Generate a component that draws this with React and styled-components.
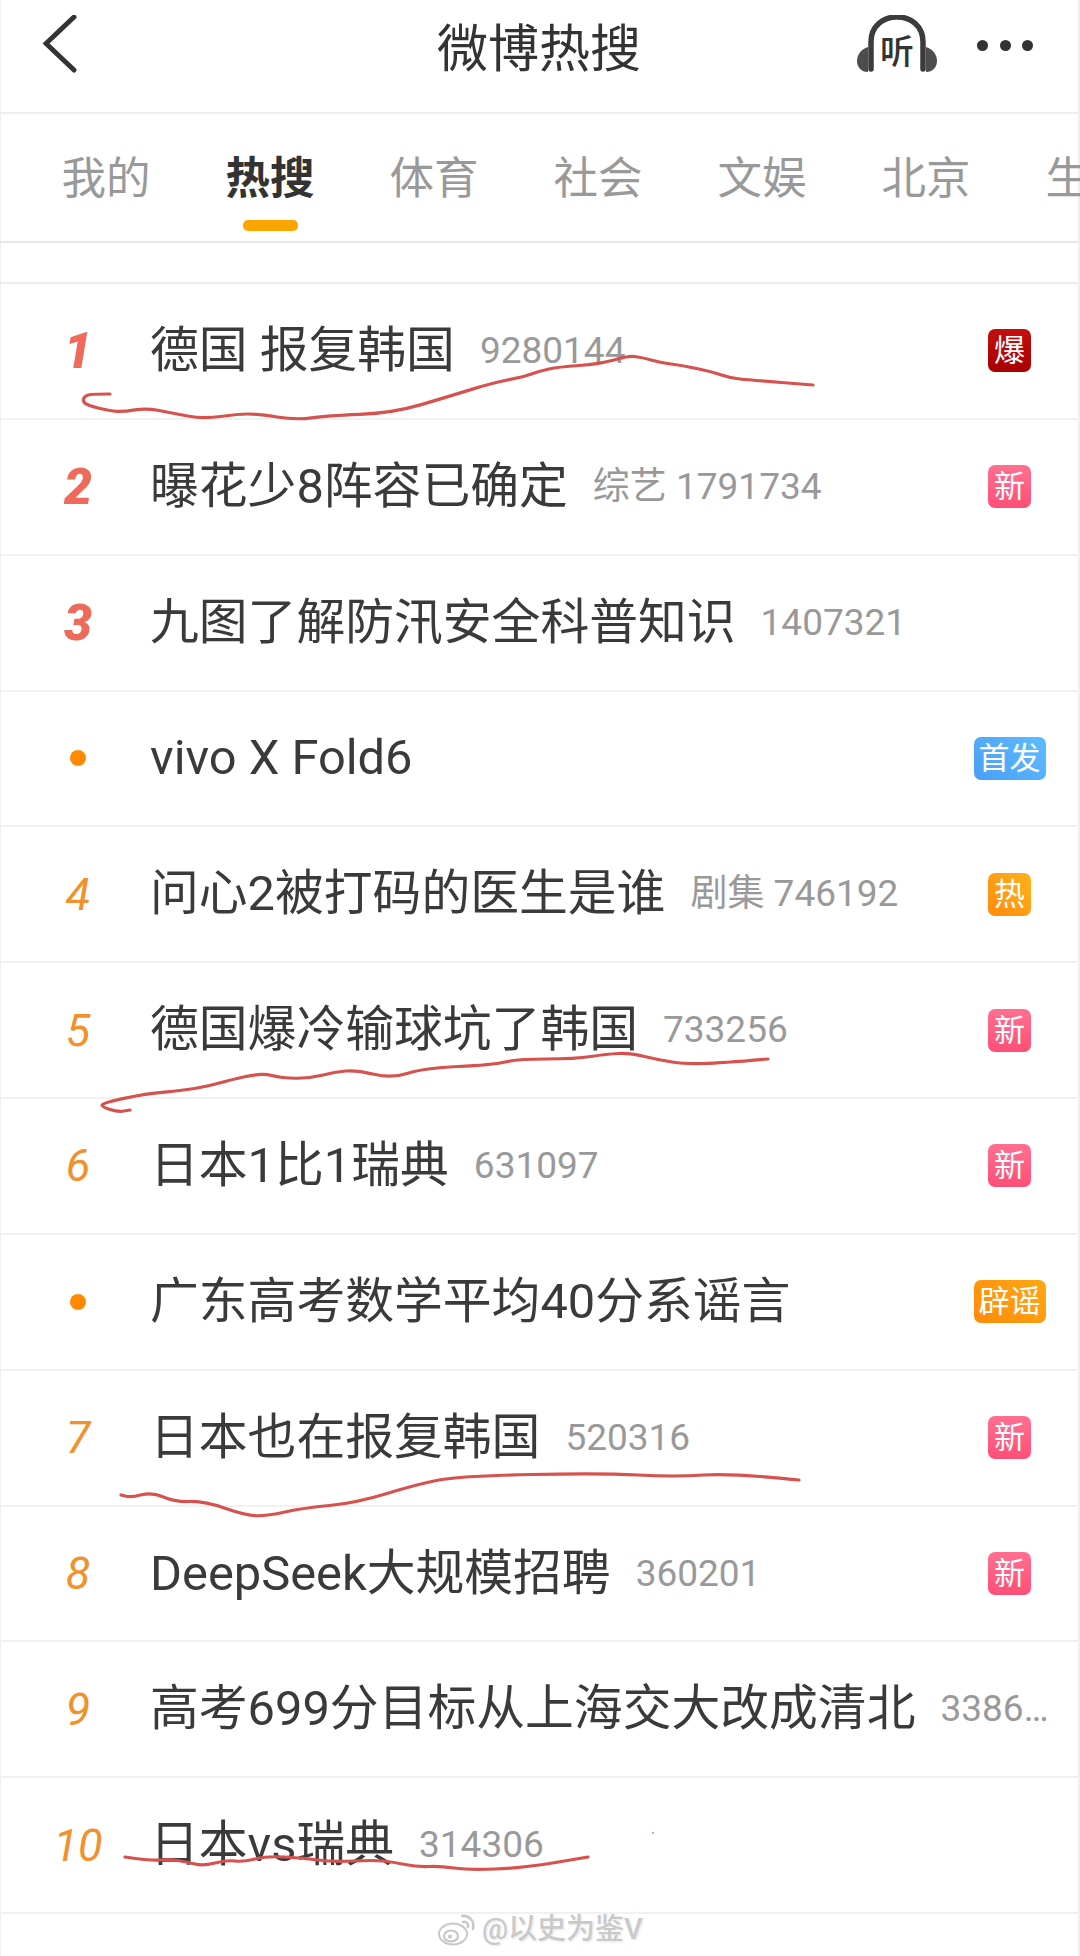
import React from "react";
import styled, { createGlobalStyle } from "styled-components";

const FONT = `Roboto, "Noto Sans CJK SC", "Noto Sans", sans-serif`;

const Global = createGlobalStyle`
  html, body { margin: 0; padding: 0; background: #fff; }
  * { box-sizing: border-box; }
`;

const Page = styled.div`
  position: relative;
  width: 1080px;
  height: 1956px;
  overflow: hidden;
  background: #fff;
  font-family: ${FONT};
  box-shadow: inset 1px 0 #efefef, inset -2px 0 #efefef;
`;

const Header = styled.header`
  height: 114px;
  padding: 0 47px 0 43px;
  display: grid;
  grid-template-columns: 1fr auto 1fr;
  align-items: start;
  border-bottom: 2px solid #eeeeee;
`;

const BackIcon = styled.svg`
  display: block;
  width: 36px;
  height: 62px;
  margin-top: 15px;
`;

const Title = styled.h1`
  margin: 20px 0 0 2px;
  font-size: 51px;
  line-height: 60px;
  font-weight: 400;
  color: #333;
`;

const HeaderActions = styled.div`
  display: flex;
  align-items: flex-start;
  justify-content: flex-end;
  gap: 40px;
`;

const HeadphoneIcon = styled.svg`
  display: block;
  width: 80px;
  height: 58px;
  margin-top: 15px;
`;

const MoreDots = styled.div`
  display: flex;
  gap: 11.5px;
  margin-top: 40px;
`;

const MoreDot = styled.span`
  width: 11px;
  height: 11px;
  border-radius: 50%;
  background: #333;
`;

const TabBar = styled.nav`
  height: 129px;
  padding-left: 24px;
  display: flex;
  overflow: hidden;
  border-bottom: 2px solid #e8e8e8;
`;

const Tab = styled.div`
  flex: 0 0 164px;
  padding-top: 37px;
  display: flex;
  flex-direction: column;
  align-items: center;
`;

const TabLabel = styled.span`
  font-size: 44.5px;
  line-height: 56px;
  white-space: nowrap;
  font-weight: ${(p) => (p.$active ? 700 : 400)};
  color: ${(p) => (p.$active ? "#333" : "#999")};
`;

const TabIndicator = styled.span`
  width: 55px;
  height: 11px;
  margin-top: 13px;
  border-radius: 5px;
  background: #ffa500;
`;

const Spacer = styled.div`
  height: 41px;
  border-bottom: 2px solid #eeeeee;
`;

const List = styled.ul`
  margin: 0;
  padding: 0;
  list-style: none;
`;

const Row = styled.li`
  height: 135.85px;
  padding-right: 30px;
  display: flex;
  align-items: center;
  border-bottom: 2px solid #f1f1f1;
`;

const Rank = styled.span`
  flex: 0 0 150px;
  padding-left: 6px;
  display: flex;
  justify-content: center;
  align-items: center;
  font-style: italic;
  font-size: ${(p) => (p.$top ? "50px" : "45px")};
  font-weight: ${(p) => (p.$top ? 900 : 400)};
  color: ${(p) => (p.$top ? "#ee6a5b" : "#f0912b")};
`;

const Bullet = styled.span`
  width: 16px;
  height: 16px;
  border-radius: 50%;
  background: #ff8a00;
`;

const Name = styled.span`
  flex: none;
  font-size: 48.8px;
  line-height: 60px;
  color: #3a3a3a;
  white-space: nowrap;
`;

const Count = styled.span`
  flex: 0 1 auto;
  min-width: 0;
  margin-left: 25px;
  font-size: 37px;
  line-height: 44px;
  color: #999;
  white-space: nowrap;
  overflow: hidden;
  text-overflow: ellipsis;
`;

const BADGE_TONES = {
  boom: "linear-gradient(180deg, #c40f0f, #a80000)",
  fresh: "linear-gradient(180deg, #ff7090, #ff4f76)",
  first: "linear-gradient(225deg, #5cbcff, #4a9ff5)",
  hot: "linear-gradient(45deg, #ff8a0a, #ffb21e)",
  rumor: "linear-gradient(45deg, #ff8a0a, #ffa814)",
};

const BadgeSlot = styled.span`
  flex: 0 0 73px;
  margin: 0 4px 0 auto;
  display: flex;
  justify-content: center;
`;

const Badge = styled.span`
  height: 43px;
  min-width: 43px;
  padding: 0 5px;
  border-radius: 7px;
  display: flex;
  align-items: center;
  justify-content: center;
  font-size: 31px;
  line-height: 43px;
  color: #fff;
  white-space: nowrap;
  background: ${(p) => BADGE_TONES[p.$tone]};
`;

const InkLayer = styled.svg`
  position: absolute;
  left: 0;
  top: 0;
  width: 1080px;
  height: 1956px;
  pointer-events: none;
`;

const Watermark = styled.div`
  position: absolute;
  left: 438px;
  top: 1911px;
  display: flex;
  align-items: center;
  gap: 5px;
`;

const WatermarkLogo = styled.svg`
  display: block;
  width: 39px;
  height: 34px;
`;

const WatermarkText = styled.span`
  font-size: 29px;
  line-height: 36px;
  font-weight: 500;
  color: #c9c9c9;
  text-shadow: 0 0 2px #fff, 0 0 2px #fff, 1px 1px 2px rgba(0, 0, 0, 0.15);
  white-space: nowrap;
`;

const TABS = ["我的", "热搜", "体育", "社会", "文娱", "北京", "生活"];

const ROWS = [
  { rank: "1", top: true, name: "德国 报复韩国", count: "9280144", badge: ["boom", "爆"] },
  { rank: "2", top: true, name: "曝花少8阵容已确定", count: "综艺 1791734", badge: ["fresh", "新"] },
  { rank: "3", top: true, name: "九图了解防汛安全科普知识", count: "1407321" },
  { name: "vivo X Fold6", badge: ["first", "首发"] },
  { rank: "4", name: "问心2被打码的医生是谁", count: "剧集 746192", badge: ["hot", "热"] },
  { rank: "5", name: "德国爆冷输球坑了韩国", count: "733256", badge: ["fresh", "新"] },
  { rank: "6", name: "日本1比1瑞典", count: "631097", badge: ["fresh", "新"] },
  { name: "广东高考数学平均40分系谣言", badge: ["rumor", "辟谣"] },
  { rank: "7", name: "日本也在报复韩国", count: "520316", badge: ["fresh", "新"] },
  { rank: "8", name: "DeepSeek大规模招聘", count: "360201", badge: ["fresh", "新"] },
  { rank: "9", name: "高考699分目标从上海交大改成清北", count: "338600" },
  { rank: "10", name: "日本vs瑞典", count: "314306" },
];

const STROKES = [
  [[110,394],[96,394],[86,395],[82.6,400],[86,405],[110,411],[124,411.7],[146,408],[172,413],[203,419],[238,414],[258,414],[296,420],[327,415.7],[392.6,413],[448,396.7],[492,383],[523,377],[540,371],[558,367],[600,364],[628,356],[640,357],[662,363],[680,365],[713,372],[730,378],[750,380],[813,385]],
  [[768,1059],[722,1063],[685,1064],[659,1060],[630,1053],[607,1054],[575,1059],[518,1059],[492,1065],[424,1068],[392,1078.5],[356,1070],[335,1072],[309,1078.5],[282,1078],[261.5,1073],[230,1080],[209,1086],[183,1090.5],[146,1093.7],[102,1103],[102,1107],[118,1112],[130,1110]],
  [[799,1480],[732,1473],[675,1477],[601,1473],[460,1476],[418,1484],[356,1503],[303,1508],[267,1516],[246,1515.5],[204,1501],[175,1502],[152,1492],[131,1497.6],[121,1495]],
  [[125,1857],[153,1861],[168,1859],[187,1862],[203,1866],[227,1860],[243,1862],[267,1856],[303,1858],[333,1862],[373,1860],[393,1862],[417,1867],[440,1866],[468,1870],[523,1868],[588,1857]],
];

function smooth(points) {
  let d = `M${points[0][0]} ${points[0][1]}`;
  for (let i = 1; i < points.length - 1; i++) {
    const mx = (points[i][0] + points[i + 1][0]) / 2;
    const my = (points[i][1] + points[i + 1][1]) / 2;
    d += ` Q${points[i][0]} ${points[i][1]} ${mx} ${my}`;
  }
  const last = points[points.length - 1];
  return `${d} L${last[0]} ${last[1]}`;
}

export default function App() {
  return (
    <Page>
      <Global />
      <Header>
        <BackIcon viewBox="0 0 36 62" aria-label="返回">
          <path d="M31 2 L3 28.5 L31 55" fill="none" stroke="#333" strokeWidth="5" strokeLinecap="round" strokeLinejoin="miter" />
        </BackIcon>
        <Title>微博热搜</Title>
        <HeaderActions>
          <HeadphoneIcon viewBox="0 0 80 58" aria-label="听">
            <path d="M14 54 V27 C14 11 26 2 40 2 C54 2 66 11 66 27 V54" fill="none" stroke="#3c3c3c" strokeWidth="5.5" strokeLinecap="round" />
            <path d="M11 32 C4 34 0 40 0 46 C0 52 4 57 11 57 Z" fill="#4d4d4d" />
            <path d="M69 32 C76 34 80 40 80 46 C80 52 76 57 69 57 Z" fill="#4d4d4d" />
            <text x="40" y="49" textAnchor="middle" fontSize="34" fontWeight="500" fill="#333" fontFamily={`"Noto Sans CJK SC", sans-serif`}>听</text>
          </HeadphoneIcon>
          <MoreDots>
            <MoreDot />
            <MoreDot />
            <MoreDot />
          </MoreDots>
        </HeaderActions>
      </Header>
      <TabBar>
        {TABS.map((t) => (
          <Tab key={t}>
            <TabLabel $active={t === "热搜"}>{t}</TabLabel>
            {t === "热搜" && <TabIndicator />}
          </Tab>
        ))}
      </TabBar>
      <Spacer />
      <List>
        {ROWS.map((r) => (
          <Row key={r.name}>
            <Rank $top={r.top}>{r.rank || <Bullet />}</Rank>
            <Name>{r.name}</Name>
            {r.count && <Count>{r.count}</Count>}
            {r.badge && (
              <BadgeSlot>
                <Badge $tone={r.badge[0]}>{r.badge[1]}</Badge>
              </BadgeSlot>
            )}
          </Row>
        ))}
      </List>
      <InkLayer viewBox="0 0 1080 1956">
        {STROKES.map((s, i) => (
          <path key={i} d={smooth(s)} fill="none" stroke="#d6524f" strokeWidth="3.2" strokeLinecap="round" strokeLinejoin="round" />
        ))}
        <circle cx="653" cy="1833" r="1" fill="#d98a80" />
      </InkLayer>
      <Watermark>
        <WatermarkLogo viewBox="0 0 39 34" aria-hidden="true">
          <ellipse cx="15" cy="22" rx="14" ry="10.5" fill="#fff" stroke="#c9c9c9" strokeWidth="2" />
          <ellipse cx="13" cy="24" rx="7" ry="5.5" fill="none" stroke="#c4c4c4" strokeWidth="2" />
          <circle cx="12" cy="24.5" r="2" fill="#c4c4c4" />
          <path d="M24 4 C31 3 37 9 35 17" fill="none" stroke="#c9c9c9" strokeWidth="2.5" strokeLinecap="round" />
          <path d="M25 10 C28 9 31 12 30 15" fill="none" stroke="#c9c9c9" strokeWidth="2.5" strokeLinecap="round" />
        </WatermarkLogo>
        <WatermarkText>@以史为鉴V</WatermarkText>
      </Watermark>
    </Page>
  );
}
